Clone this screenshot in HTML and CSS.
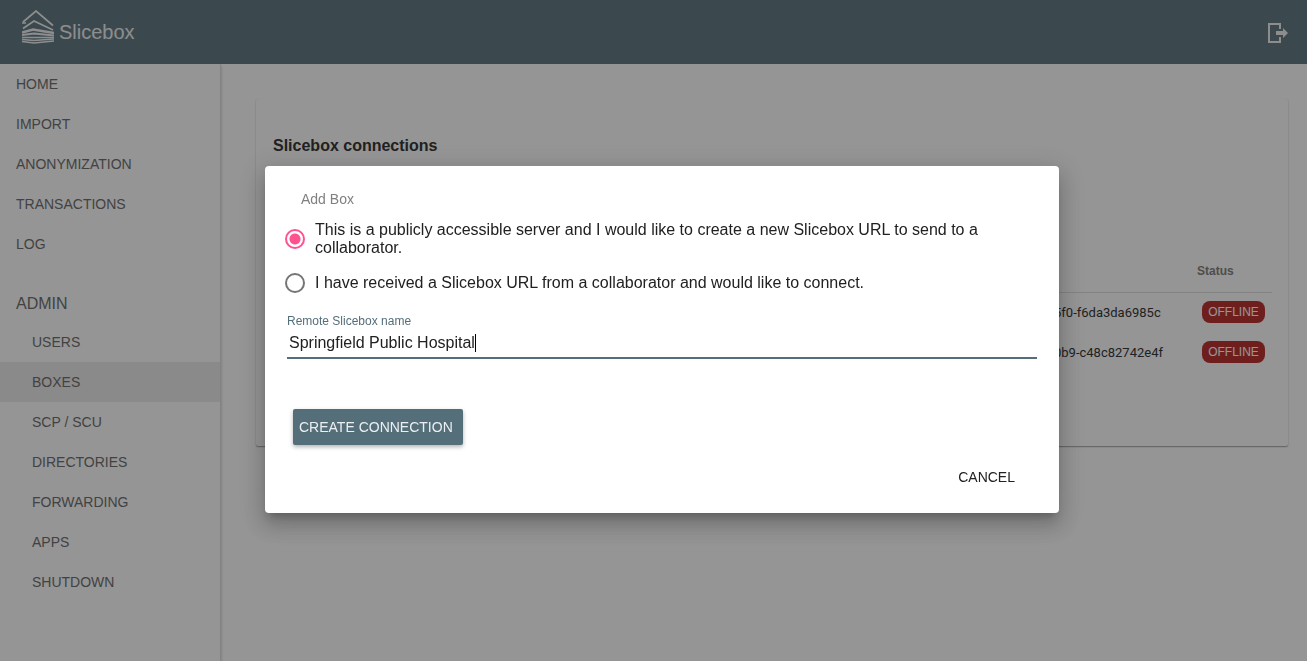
FILE: index.html
```html
<!DOCTYPE html>
<html lang="en">
<head>
<meta charset="utf-8">
<title>Slicebox</title>
<link rel="stylesheet" href="styles.css">
</head>
<body>
<header class="toolbar">
  <a class="brand" href="#">
    <svg class="logo" viewBox="0 0 32 34" aria-hidden="true">
      <g fill="none" stroke="currentColor">
        <path d="M1 12 14 1 31 15.500" stroke-width="1.700"/>
        <path d="M0 13 4 13M1 18.500 12 11 31 20" stroke-width="1.700"/>
        <path d="M0 22.500 11 19.500 32 23" stroke-width="2.400"/>
        <path d="M0 25 12 23.500 32 25.500" stroke-width="1.800"/>
        <path d="M0 27.500H32" stroke-width="1.500"/>
        <path d="M0 29.500 12 30.500 32 29" stroke-width="1.500"/>
        <path d="M0 31.500 12 33 32 31" stroke-width="1.700"/>
      </g>
    </svg>
    <span>Slicebox</span>
  </a>
  <button class="logout" type="button" aria-label="Log out">
    <svg viewBox="0 0 21 21" aria-hidden="true">
      <path d="M12 7V2H1V20H12V15" fill="none" stroke="currentColor" stroke-width="2"/>
      <path d="M8 9H15V6L20 11 15 16V13H8Z" fill="currentColor"/>
    </svg>
  </button>
</header>
<div class="layout">
  <nav class="sidebar">
    <a href="#">HOME</a>
    <a href="#">IMPORT</a>
    <a href="#">ANONYMIZATION</a>
    <a href="#">TRANSACTIONS</a>
    <a href="#">LOG</a>
    <h2>ADMIN</h2>
    <div class="subnav">
      <a href="#">USERS</a>
      <a href="#" class="active">BOXES</a>
      <a href="#">SCP / SCU</a>
      <a href="#">DIRECTORIES</a>
      <a href="#">FORWARDING</a>
      <a href="#">APPS</a>
      <a href="#">SHUTDOWN</a>
    </div>
  </nav>
  <main class="content">
    <section class="card">
      <h1>Slicebox connections</h1>
      <table class="connections">
        <thead><tr><th></th><th class="id"></th><th class="status">Status</th></tr></thead>
        <tbody>
          <tr><td></td><td>5f0-f6da3da6985c</td><td><span class="badge">OFFLINE</span></td></tr>
          <tr><td></td><td>0b9-c48c82742e4f</td><td><span class="badge">OFFLINE</span></td></tr>
        </tbody>
      </table>
    </section>
  </main>
</div>
<div class="backdrop">
  <form class="dialog" role="dialog" aria-labelledby="dialog-title">
    <h2 id="dialog-title">Add Box</h2>
    <label class="option"><input type="radio" name="mode" checked><span>This is a publicly accessible server and I would like to create a new Slicebox URL to send to a collaborator.</span></label>
    <label class="option"><input type="radio" name="mode"><span>I have received a Slicebox URL from a collaborator and would like to connect.</span></label>
    <div class="field">
      <label for="remote-name">Remote Slicebox name</label>
      <div class="input-line">
        <input id="remote-name" type="text" value="Springfield Public Hospital">
        <span class="caret"></span>
      </div>
    </div>
    <button class="create" type="button">CREATE CONNECTION</button>
    <div class="actions"><button class="cancel" type="button">CANCEL</button></div>
  </form>
</div>
</body>
</html>
```
FILE: styles.css
```css
* { box-sizing: border-box; }
body {
  margin: 0;
  min-height: 100vh;
  display: flex;
  flex-direction: column;
  font-family: "Liberation Sans", Arial, sans-serif;
  font-size: 14px;
  color: #212121;
  background: #fff;
}
button { border: 0; background: none; font: inherit; color: inherit; padding: 0; }
a { color: inherit; text-decoration: none; }
.toolbar {
  height: 64px;
  padding: 0 18px 0 22px;
  display: flex;
  align-items: center;
  justify-content: space-between;
  background: #546e7a;
  color: #f0f0f0;
}
.brand { display: flex; align-items: flex-end; gap: 5px; font-size: 20px; line-height: 24px; padding-bottom: 10px; }
.logo { width: 32px; height: 34px; }
.logout { display: flex; }
.logout svg { width: 21px; height: 21px; }
.layout { flex: 1; display: flex; }
.sidebar {
  width: 221px;
  flex-shrink: 0;
  color: #616161;
  border-right: 1px solid #ddd;
  box-shadow: 1px 2px 2px rgba(0, 0, 0, 0.14);
}
.sidebar a { display: block; line-height: 40px; padding-left: 16px; }
.sidebar h2 { margin: 20px 0 0; padding-left: 16px; font-size: 16px; font-weight: 400; line-height: 40px; height: 38px; }
.sidebar .subnav a { padding-left: 32px; }
.sidebar .active { background: #eaeaea; }
.content { flex: 1; padding: 35px 19px 0 35px; }
.card {
  min-height: 347px;
  padding: 37px 16px 0 17px;
  border-radius: 2px;
  box-shadow: 0 1px 2px rgba(0, 0, 0, 0.2), 0 1px 1px rgba(0, 0, 0, 0.24);
}
.card h1 { margin: 0; font-size: 16px; line-height: 20px; }
.connections { width: 100%; margin-top: 94px; border-collapse: collapse; table-layout: fixed; }
.connections th { height: 42px; padding: 0; font-size: 12px; text-align: left; color: #757575; border-bottom: 1px solid #ddd; }
.connections .id { width: 143px; }
.connections .status { width: 75px; }
.connections td { height: 40px; padding: 0; font-family: Roboto, sans-serif; font-size: 13px; }
.connections td:last-child { padding-left: 5px; }
.badge {
  display: block;
  width: 63px;
  border-radius: 8px;
  background: #b71c1c;
  color: #fff;
  font: 12px/22px "Liberation Sans", Arial, sans-serif;
  text-align: center;
}
.backdrop {
  position: fixed;
  inset: 0;
  display: flex;
  align-items: center;
  justify-content: center;
  padding: 18px 0 0 17px;
  background: rgba(33, 33, 33, 0.48);
}
.dialog {
  width: 100%;
  max-width: 794px;
  padding: 21px 20px 18px;
  border-radius: 4px;
  background: #fff;
  box-shadow: 0 7px 8px -4px rgba(0, 0, 0, 0.2), 0 13px 19px 2px rgba(0, 0, 0, 0.14), 0 5px 24px 4px rgba(0, 0, 0, 0.12);
}
.dialog h2 { margin: 0 0 10px; padding-left: 16px; font-size: 14px; font-weight: 400; line-height: 24px; color: #808080; }
.option { display: flex; align-items: center; gap: 10px; margin-bottom: 16px; font-size: 16px; line-height: 18px; }
.option input {
  appearance: none;
  flex-shrink: 0;
  width: 20px;
  height: 20px;
  margin: 0;
  border: 2px solid #757575;
  border-radius: 50%;
}
.option input:checked { border-color: #ff5291; background: radial-gradient(circle, #ff5291 5px, transparent 6px); }
.field { display: flex; flex-direction: column; padding: 4px 2px 0; }
.field label { font-size: 12px; line-height: 16px; color: #546e7a; }
.input-line {
  display: flex;
  align-items: center;
  height: 30px;
  padding-left: 2px;
  border-bottom: 2px solid #546e7a;
}
.input-line input {
  field-sizing: content;
  padding: 0;
  border: 0;
  outline: 0;
  background: none;
  color: #212121;
  caret-color: transparent;
  font: 16px "Liberation Sans", Arial, sans-serif;
}
.caret { width: 1px; height: 18px; background: #000; }
.create {
  display: block;
  height: 36px;
  margin: 50px 0 0 8px;
  padding: 0 10px 0 6px;
  border-radius: 2px;
  background: #546e7a;
  color: #eceff1;
  box-shadow: 0 2px 4px rgba(0, 0, 0, 0.3);
}
.actions { display: flex; justify-content: flex-end; padding: 14px 24px 0 0; }
.cancel { height: 36px; }
```
